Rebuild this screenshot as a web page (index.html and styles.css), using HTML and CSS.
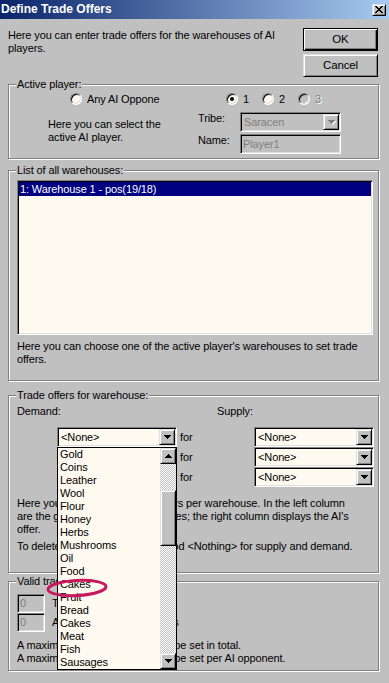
FILE: index.html
```html
<!DOCTYPE html>
<html lang="en">
<head>
    <meta charset="UTF-8">
    <meta name="viewport" content="width=device-width, initial-scale=1.0">
    <title>Define Trade Offers</title>
    <link rel="stylesheet" href="styles.css">
</head>
<body>
    <!-- Title bar -->
    <div class="titlebar">
        <span class="title">Define Trade Offers</span>
        <div class="close-btn bevel">
            <svg width="8" height="7" viewBox="0 0 8 7" shape-rendering="crispEdges"><path d="M0 0h2v1h-2zM6 0h2v1h-2zM1 1h2v1h-2zM5 1h2v1h-2zM2 2h4v1h-4zM3 3h2v1h-2zM2 4h4v1h-4zM1 5h2v1h-2zM5 5h2v1h-2zM0 6h2v1h-2zM6 6h2v1h-2z"/></svg>
        </div>
    </div>

    <div class="dialog">
        <div class="top-row">
            <p class="intro">Here you can enter trade offers for the warehouses of AI players.</p>
            <div class="buttons">
                <div class="btn default">OK</div>
                <div class="btn bevel">Cancel</div>
            </div>
        </div>

        <!-- Active player -->
        <div class="group player-group">
            <div class="group-title">Active player:</div>
            <div class="player-grid">
                <div class="option any-option"><span class="radio"></span>Any AI Oppone</div>
                <div class="player-numbers">
                    <div class="option"><span class="radio checked"></span>1</div>
                    <div class="option"><span class="radio"></span>2</div>
                    <div class="option disabled"><span class="radio"></span>3</div>
                </div>
                <p class="player-hint">Here you can select the<br>active AI player.</p>
                <div class="player-fields">
                    <span>Tribe:</span>
                    <div class="combo field disabled">
                        <span class="combo-value">Saracen</span>
                        <span class="drop-btn bevel">
                            <svg class="arrow" width="7" height="4" viewBox="0 0 7 4" shape-rendering="crispEdges"><path d="M0 0h7v1h-7zM1 1h5v1h-5zM2 2h3v1h-3zM3 3h1v1h-1z"/></svg>
                        </span>
                    </div>
                    <span>Name:</span>
                    <div class="edit field disabled">Player1</div>
                </div>
            </div>
        </div>

        <!-- Warehouses -->
        <div class="group list-group">
            <div class="group-title">List of all warehouses:</div>
            <div class="listbox field">
                <div class="list-row selected">1: Warehouse 1 - pos(19/18)</div>
            </div>
            <p class="list-note">Here you can choose one of the active player's warehouses to set trade offers.</p>
        </div>

        <!-- Trade offers -->
        <div class="group trade-group">
            <div class="group-title">Trade offers for warehouse:</div>
            <div class="trade-head"><span class="demand-label">Demand:</span><span>Supply:</span></div>
            <div class="trade-grid">
                <div class="combo field open">
                    <span class="combo-value">&lt;None&gt;</span>
                    <span class="drop-btn bevel">
                        <svg class="arrow" width="7" height="4" viewBox="0 0 7 4" shape-rendering="crispEdges"><path d="M0 0h7v1h-7zM1 1h5v1h-5zM2 2h3v1h-3zM3 3h1v1h-1z"/></svg>
                    </span>
                    <div class="dropdown">
                        <div class="dropdown-items">
                            <div class="item">Gold</div>
                            <div class="item">Coins</div>
                            <div class="item">Leather</div>
                            <div class="item">Wool</div>
                            <div class="item">Flour</div>
                            <div class="item">Honey</div>
                            <div class="item">Herbs</div>
                            <div class="item">Mushrooms</div>
                            <div class="item">Oil</div>
                            <div class="item">Food</div>
                            <div class="item marked">Cakes
                                <svg class="ring" width="62" height="20" viewBox="0 0 62 20"><ellipse cx="31" cy="10" rx="29" ry="7.5" transform="rotate(-3 31 10)" fill="none" stroke="#c8175d" stroke-width="3"/></svg>
                            </div>
                            <div class="item">Fruit</div>
                            <div class="item">Bread</div>
                            <div class="item">Cakes</div>
                            <div class="item">Meat</div>
                            <div class="item">Fish</div>
                            <div class="item">Sausages</div>
                        </div>
                        <div class="scrollbar">
                            <span class="scroll-btn bevel">
                                <svg width="7" height="4" viewBox="0 0 7 4" shape-rendering="crispEdges"><path d="M3 0h1v1h-1zM2 1h3v1h-3zM1 2h5v1h-5zM0 3h7v1h-7z"/></svg>
                            </span>
                            <span class="scroll-track"><span class="scroll-thumb bevel"></span></span>
                            <span class="scroll-btn bevel">
                                <svg width="7" height="4" viewBox="0 0 7 4" shape-rendering="crispEdges"><path d="M0 0h7v1h-7zM1 1h5v1h-5zM2 2h3v1h-3zM3 3h1v1h-1z"/></svg>
                            </span>
                        </div>
                    </div>
                </div>
                <span class="for-label">for</span>
                <div class="combo field">
                    <span class="combo-value">&lt;None&gt;</span>
                    <span class="drop-btn bevel">
                        <svg width="7" height="4" viewBox="0 0 7 4" shape-rendering="crispEdges"><path d="M0 0h7v1h-7zM1 1h5v1h-5zM2 2h3v1h-3zM3 3h1v1h-1z"/></svg>
                    </span>
                </div>

                <div class="combo field">
                    <span class="combo-value">&lt;None&gt;</span>
                    <span class="drop-btn bevel"></span>
                </div>
                <span class="for-label">for</span>
                <div class="combo field">
                    <span class="combo-value">&lt;None&gt;</span>
                    <span class="drop-btn bevel">
                        <svg width="7" height="4" viewBox="0 0 7 4" shape-rendering="crispEdges"><path d="M0 0h7v1h-7zM1 1h5v1h-5zM2 2h3v1h-3zM3 3h1v1h-1z"/></svg>
                    </span>
                </div>

                <div class="combo field">
                    <span class="combo-value">&lt;None&gt;</span>
                    <span class="drop-btn bevel"></span>
                </div>
                <span class="for-label">for</span>
                <div class="combo field">
                    <span class="combo-value">&lt;None&gt;</span>
                    <span class="drop-btn bevel">
                        <svg width="7" height="4" viewBox="0 0 7 4" shape-rendering="crispEdges"><path d="M0 0h7v1h-7zM1 1h5v1h-5zM2 2h3v1h-3zM3 3h1v1h-1z"/></svg>
                    </span>
                </div>
            </div>
            <p class="trade-note">Here you can specify 3 trade offers per warehouse. In the left column<br>are the goods the AI player requires; the right column displays the AI's<br>offer.</p>
            <p class="trade-note second">To delete an offer, choose the good &lt;Nothing&gt; for supply and demand.</p>
        </div>

        <!-- Valid trade offers -->
        <div class="group valid-group">
            <div class="group-title">Valid trade offers:</div>
            <div class="count-rows">
                <div class="count-row"><div class="field disabled count-box">0</div><span>Total trade offers</span></div>
                <div class="count-row"><div class="field disabled count-box">0</div><span>AI players with trade offers</span></div>
            </div>
            <p class="valid-note">A maximum of 9 trade offers can be set in total.<br>A maximum of 3 trade offers can be set per AI opponent.</p>
        </div>
    </div>
</body>
</html>
```

FILE: styles.css
```css
* {
    box-sizing: border-box;
}

body {
    margin: 0;
    width: 389px;
    height: 683px;
    overflow: hidden;
    background-color: #c0c0c0;
    color: #000;
    font-family: "Liberation Sans", Arial, sans-serif;
    font-size: 11px;
    line-height: 13px;
    letter-spacing: -0.12px;
}

p {
    margin: 0;
}

/* Raised 3D look (buttons, scroll parts) */
.bevel {
    background-color: #c0c0c0;
    border: 1px solid;
    border-color: #dfdfdf #000 #000 #dfdfdf;
    box-shadow: inset 1px 1px 0 #fff, inset -1px -1px 0 #808080;
}

/* Sunken 3D look (edits, lists, combos) */
.field {
    border: 1px solid;
    border-color: #808080 #fff #fff #808080;
    box-shadow: inset 1px 1px 0 #000, inset -1px -1px 0 #dfdfdf;
    background-color: #fffaf0;
    padding: 1px;
}

.field.disabled {
    background-color: #c0c0c0;
    color: #808080;
}

/* Title bar */
.titlebar {
    height: 19px;
    display: flex;
    align-items: center;
    justify-content: space-between;
    padding: 0 3px 0 1px;
    background: linear-gradient(to right, #0a246a, #a6caf0);
}

.title {
    color: #fff;
    font-size: 12px;
    font-weight: bold;
    letter-spacing: 0;
}

.close-btn {
    width: 14px;
    height: 12px;
    display: flex;
    align-items: center;
    justify-content: center;
}

/* Dialog */
.dialog {
    padding: 9px 10px 0 8px;
}

.top-row {
    display: flex;
    justify-content: space-between;
}

.intro {
    width: 285px;
    margin-top: 1px;
}

.buttons {
    display: flex;
    flex-direction: column;
    gap: 3px;
    width: 75px;
    margin-right: 1px;
}

.btn {
    height: 23px;
    display: flex;
    align-items: center;
    justify-content: center;
    font-size: 11.5px;
}

.btn.default {
    background-color: #c0c0c0;
    border: 1px solid #000;
    box-shadow: inset 1px 1px 0 #fff, inset -1px -1px 0 #000, inset -2px -2px 0 #808080;
}

/* Group boxes */
.group {
    border: 1px solid #808080;
    box-shadow: 1px 1px 0 #fff, inset 1px 1px 0 #fff;
    padding: 0 4px 0 8px;
}

.group-title {
    width: max-content;
    margin: -7px 0 0 -1px;
    padding: 0 1px;
    background-color: #c0c0c0;
}

.player-group {
    margin-top: 7px;
    height: 75px;
}

.list-group {
    margin-top: 11px;
    height: 211px;
}

.trade-group {
    margin-top: 14px;
    height: 178px;
}

.valid-group {
    margin-top: 8px;
    height: 90px;
}

/* Active player */
.player-grid {
    display: grid;
    grid-template-columns: 181px 1fr;
}

.option {
    display: flex;
    align-items: center;
    gap: 5px;
    height: 14px;
}

.option.disabled {
    color: #808080;
    text-shadow: 1px 1px 0 #fff;
}

.any-option {
    margin: 1px 0 0 53px;
}

.player-numbers {
    display: flex;
    gap: 13px;
    margin: 1px 0 0 28px;
}

.radio {
    width: 12px;
    height: 12px;
    display: flex;
    align-items: center;
    justify-content: center;
    border-radius: 50%;
    border: 1px solid;
    border-color: #808080 #fff #fff #808080;
    box-shadow: inset 1px 1px 0 #000, inset -1px -1px 0 #dfdfdf;
    background-color: #fffaf0;
}

.radio.checked::after {
    content: "";
    width: 4px;
    height: 4px;
    border-radius: 50%;
    background-color: #000;
}

.option.disabled .radio {
    background-color: #c0c0c0;
}

.player-hint {
    margin: 12px 0 0 31px;
}

.player-fields {
    display: grid;
    grid-template-columns: 42px 101px;
    row-gap: 2px;
    align-items: start;
    margin-top: 6px;
}

.combo {
    display: flex;
    height: 20px;
}

.combo-value {
    flex: 1;
    padding-left: 2px;
    line-height: 16px;
}

.drop-btn {
    width: 16px;
    height: 16px;
    display: flex;
    align-items: center;
    justify-content: center;
}

.field.disabled .arrow {
    fill: #808080;
    filter: drop-shadow(1px 1px 0 #fff);
}

.edit {
    height: 20px;
    padding-left: 2px;
    line-height: 16px;
}

/* Warehouse list */
.listbox {
    width: 356px;
    height: 155px;
    margin-top: 3px;
}

.list-row {
    height: 14px;
    line-height: 14px;
    padding-left: 1px;
}

.list-row.selected {
    background-color: #000080;
    color: #fff;
}

.list-note {
    margin-top: 5px;
}

/* Trade offers */
.trade-head {
    display: flex;
    margin-top: 3px;
}

.demand-label {
    width: 200px;
}

.trade-grid {
    display: grid;
    grid-template-columns: 120px 77px 120px;
    grid-auto-rows: 20px;
    margin: 9px 0 0 40px;
}

.for-label {
    padding-left: 3px;
    line-height: 20px;
}

.trade-note {
    margin-top: 10px;
}

.trade-note.second {
    margin-top: 4px;
}

/* Opened drop-down list */
.combo.open {
    position: relative;
}

.dropdown {
    position: absolute;
    top: calc(100% + 1px);
    left: -1px;
    z-index: 5;
    display: flex;
    width: 120px;
    height: 223px;
    border: 1px solid #000;
    background-color: #fffaf0;
    color: #000;
}

.dropdown-items {
    flex: 1;
}

.item {
    height: 13px;
    line-height: 13px;
    padding-left: 2px;
}

.item.marked {
    position: relative;
}

.ring {
    position: absolute;
    left: -12px;
    top: 0;
}

.scrollbar {
    display: flex;
    flex-direction: column;
    width: 16px;
}

.scroll-btn {
    height: 16px;
    display: flex;
    align-items: center;
    justify-content: center;
}

.scroll-track {
    flex: 1;
    background: repeating-conic-gradient(#c0c0c0 0 25%, #fff 0 50%) 0 0 / 2px 2px;
}

.scroll-thumb {
    display: block;
    height: 56px;
    margin-top: 26px;
}

/* Valid trade offers */
.count-rows {
    margin-top: 6px;
}

.count-row {
    display: flex;
    align-items: center;
    gap: 7px;
    height: 19px;
}

.count-box {
    width: 28px;
    height: 19px;
    padding-left: 2px;
    line-height: 15px;
}

.valid-note {
    margin-top: 7px;
}
```
